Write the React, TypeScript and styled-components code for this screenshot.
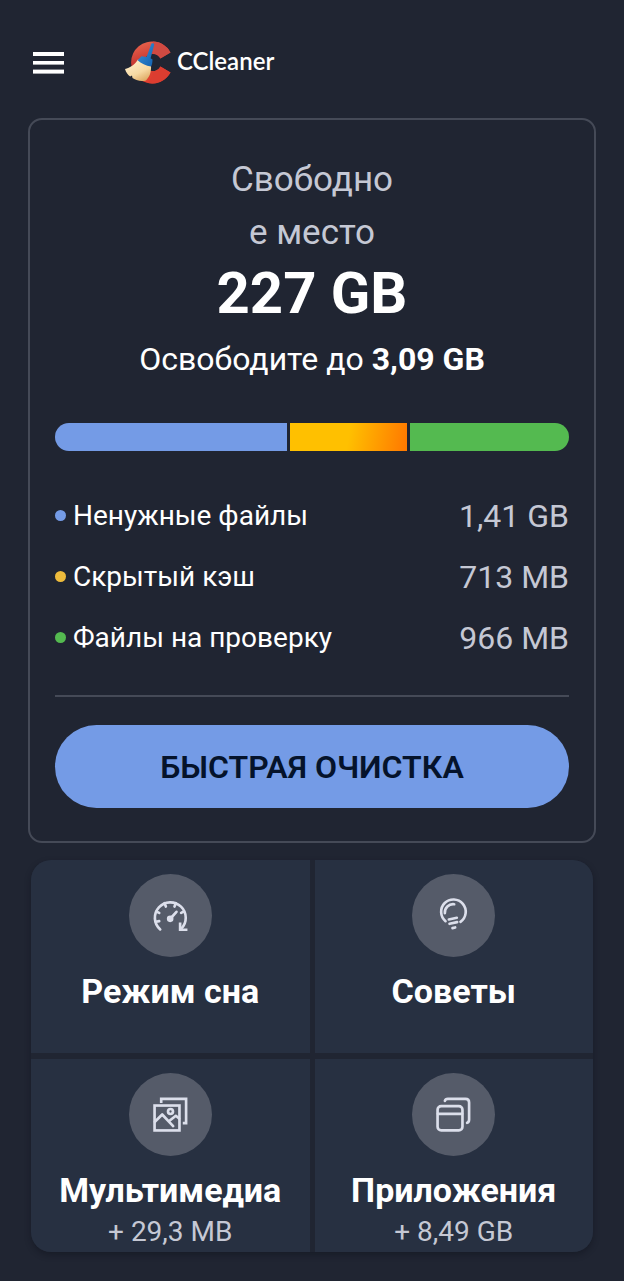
import React from "react";
import styled, { createGlobalStyle } from "styled-components";

const GlobalStyle = createGlobalStyle`
  * {
    box-sizing: border-box;
  }
  body {
    margin: 0;
    background: #202532;
    color: #ffffff;
    font-family: Roboto, "Noto Sans", sans-serif;
  }
`;

const Screen = styled.div`
  padding: 0 28px 28px;
`;

const Header = styled.header`
  display: flex;
  align-items: center;
  gap: 55px;
  height: 118px;
  padding-top: 7px;
`;

const MenuButton = styled.button`
  display: flex;
  padding: 4px;
  border: 0;
  background: none;
  color: #ffffff;
  cursor: pointer;
`;

const Brand = styled.a`
  display: flex;
  align-items: center;
  gap: 4px;
  color: #ffffff;
  text-decoration: none;
`;

const BrandName = styled.span`
  padding-bottom: 3px;
  font-family: Lato, sans-serif;
  font-size: 24px;
  font-weight: 600;
  line-height: 28px;
`;

const Card = styled.section`
  display: flex;
  flex-direction: column;
  padding: 33px 25px 33px;
  border: 2px solid #454a57;
  border-radius: 14px;
`;

const Summary = styled.div`
  display: flex;
  flex-direction: column;
  align-items: center;
  text-align: center;
`;

const Caption = styled.h1`
  width: 168px;
  margin: 0;
  color: #c5c8d4;
  font-size: 35px;
  font-weight: 400;
  line-height: 53px;
`;

const FreeSpace = styled.strong`
  font-size: 58px;
  font-weight: 700;
  line-height: 68px;
`;

const Hint = styled.p`
  margin: 12px 0 0;
  font-size: 32px;
  line-height: 40px;
`;

const UsageBar = styled.div`
  display: flex;
  gap: 3px;
  height: 28px;
  margin: 44px 0 34px;
  border-radius: 14px;
  overflow: hidden;
`;

const Segment = styled.div<{ $share: number; $fill: string }>`
  flex: ${(p) => p.$share} 1 0;
  background: ${(p) => p.$fill};
`;

const Legend = styled.ul`
  margin: 0;
  padding: 0;
  list-style: none;
`;

const LegendRow = styled.li`
  display: flex;
  align-items: center;
  height: 61px;
`;

const Dot = styled.span<{ $color: string }>`
  width: 11px;
  height: 11px;
  margin-right: 7px;
  border-radius: 50%;
  background: ${(p) => p.$color};
`;

const LegendLabel = styled.span`
  flex: 1;
  font-size: 28px;
`;

const LegendValue = styled.span`
  color: #c5c8d4;
  font-size: 32px;
`;

const Divider = styled.hr`
  width: 100%;
  height: 2px;
  margin: 27px 0 28px;
  border: 0;
  background: #454a57;
`;

const CleanButton = styled.button`
  height: 83px;
  border: 0;
  border-radius: 42px;
  background: #749be6;
  color: #05132b;
  font-family: inherit;
  font-size: 32px;
  font-weight: 600;
  cursor: pointer;
`;

const Tiles = styled.nav`
  display: grid;
  grid-template-columns: 1fr 1fr;
  gap: 6px 5px;
  margin: 17px 3px 0;
  border-radius: 20px;
  box-shadow: 0 3px 6px rgba(12, 16, 26, 0.4);
  background: #202532;
  overflow: hidden;
`;

const Tile = styled.a`
  display: flex;
  flex-direction: column;
  align-items: center;
  min-height: 193px;
  padding-top: 14px;
  background: #273041;
  color: #ffffff;
  text-decoration: none;
`;

const IconDisc = styled.span`
  display: flex;
  width: 83px;
  height: 83px;
  border-radius: 50%;
  background: #555b69;
  color: #dcdfeb;
`;

const TileTitle = styled.span`
  margin-top: 12px;
  font-size: 34px;
  font-weight: 700;
  line-height: 44px;
`;

const TileNote = styled.span`
  color: #c5c8d4;
  font-size: 28px;
  line-height: 40px;
`;

const MenuIcon = () => (
  <svg width="33" height="22" viewBox="0 0 33 22" fill="currentColor" aria-hidden="true">
    <rect x="1" y="0" width="31" height="4" />
    <rect x="1" y="9" width="31" height="3.6" />
    <rect x="1" y="17.6" width="31" height="4" />
  </svg>
);

const Logo = () => (
  <svg width="49" height="44" viewBox="0 0 49 44" aria-hidden="true">
    <defs>
      <linearGradient id="ring" x1="0" y1="0" x2="0.3" y2="1">
        <stop offset="0" stopColor="#ef6a50" />
        <stop offset="0.5" stopColor="#c93a34" />
        <stop offset="1" stopColor="#e5402f" />
      </linearGradient>
      <linearGradient id="bristle" x1="0.2" y1="0" x2="0.8" y2="1">
        <stop offset="0" stopColor="#fff0cf" />
        <stop offset="0.6" stopColor="#f7d9a2" />
        <stop offset="1" stopColor="#dca65f" />
      </linearGradient>
      <linearGradient id="handle" x1="0" y1="0" x2="1" y2="1">
        <stop offset="0" stopColor="#3d94dc" />
        <stop offset="1" stopColor="#1260ae" />
      </linearGradient>
    </defs>
    <path
      d="M46.5 11.4A21 21 0 1 0 46.5 31.6L36.400 25.400A8.6 8.6 0 1 1 36.400 17.600Z"
      fill="url(#ring)"
    />
    <path d="M29 0.600A21 21 0 0 1 46.5 11.4L36.400 17.600A8.6 8.6 0 0 0 29 13Z" fill="#d04a42" />
    <path d="M46.5 31.6A21 21 0 0 1 24 42L31 30A8.600 8.600 0 0 0 36.400 25.400Z" fill="#dc3d30" />
    <path
      d="M14 18.5C11 23.5 6 27 1 28C2 31.5 4 34 6.200 35.500L8 34.500L8.500 37C11 39 17 41 22 39.500C25.500 36 27.500 31 27 24.500Z"
      fill="url(#bristle)"
    />
    <path
      d="M27.400 2.800C28.300 1.800 30.300 2.400 30.200 3.800L26.600 17.200L28.500 18.500C28.500 21 28 24 27 25.500C22 24.800 17 22.500 13.600 19.200L17.500 15.300L22.600 16Z"
      fill="url(#handle)"
    />
  </svg>
);

const DiscIcon = ({ children }: { children: React.ReactNode }) => (
  <svg
    width="83"
    height="83"
    viewBox="0 0 250 250"
    fill="none"
    stroke="currentColor"
    strokeWidth="8"
    strokeLinecap="round"
    strokeLinejoin="round"
    aria-hidden="true"
  >
    {children}
  </svg>
);

const GaugeIcon = () => (
  <DiscIcon>
    <path d="M94 167A46.500 46.500 0 1 1 157 165" />
    <path d="M154 150V168H172" strokeLinecap="square" strokeLinejoin="miter" />
    <path d="M81 144L91 142M82 113L91 117M107 88L111 98M141 88L137 98M165 113L157 117" />
    <path d="M125 134L143 114" />
    <circle cx="124" cy="135" r="6" fill="currentColor" />
  </DiscIcon>
);

const BulbIcon = () => (
  <DiscIcon>
    <path d="M101 142A37 37 0 1 1 146 144" />
    <path d="M99 118A25 25 0 0 1 127 91" />
    <path d="M111 137L135 132M113 150L136 145M122 163L130 161" />
  </DiscIcon>
);

const PicturesIcon = () => (
  <DiscIcon>
    <g strokeLinecap="square" strokeLinejoin="miter">
      <rect x="77" y="98" width="75" height="75" />
      <path d="M97 86V78H172V151H166" />
    </g>
    <path d="M78 147L100 125L133 160M122 144L141 129L151 137" />
    <circle cx="125" cy="116" r="7.500" />
  </DiscIcon>
);

const WindowsIcon = () => (
  <DiscIcon>
    <rect x="77" y="100" width="75" height="73" rx="11" />
    <path d="M78 123H151" />
    <path d="M99 84C100 80 103 78 108 78H161Q172 78 172 89V140Q172 148 166 150" />
  </DiscIcon>
);

const categories = [
  { label: "Ненужные файлы", value: "1,41 GB", dot: "#749be6", fill: "#749be6", share: 231 },
  {
    label: "Скрытый кэш",
    value: "713 MB",
    dot: "#edbb3c",
    fill: "linear-gradient(100deg, #ffc000 50%, #ff7a00 98%)",
    share: 117,
  },
  { label: "Файлы на проверку", value: "966 MB", dot: "#54ba50", fill: "#54ba50", share: 158 },
];

const tiles = [
  { title: "Режим сна", Icon: GaugeIcon },
  { title: "Советы", Icon: BulbIcon },
  { title: "Мультимедиа", note: "+ 29,3 MB", Icon: PicturesIcon },
  { title: "Приложения", note: "+ 8,49 GB", Icon: WindowsIcon },
];

export default function App() {
  return (
    <Screen>
      <GlobalStyle />
      <Header>
        <MenuButton aria-label="Меню">
          <MenuIcon />
        </MenuButton>
        <Brand href="#">
          <Logo />
          <BrandName>CCleaner</BrandName>
        </Brand>
      </Header>
      <main>
        <Card>
          <Summary>
            <Caption>
              Свободно
              <br />е место
            </Caption>
            <FreeSpace>227 GB</FreeSpace>
            <Hint>
              Освободите до <b>3,09 GB</b>
            </Hint>
          </Summary>
          <UsageBar>
            {categories.map((c) => (
              <Segment key={c.label} $share={c.share} $fill={c.fill} />
            ))}
          </UsageBar>
          <Legend>
            {categories.map((c) => (
              <LegendRow key={c.label}>
                <Dot $color={c.dot} />
                <LegendLabel>{c.label}</LegendLabel>
                <LegendValue>{c.value}</LegendValue>
              </LegendRow>
            ))}
          </Legend>
          <Divider />
          <CleanButton>БЫСТРАЯ ОЧИСТКА</CleanButton>
        </Card>
        <Tiles>
          {tiles.map(({ title, note, Icon }) => (
            <Tile key={title} href="#">
              <IconDisc>
                <Icon />
              </IconDisc>
              <TileTitle>{title}</TileTitle>
              {note && <TileNote>{note}</TileNote>}
            </Tile>
          ))}
        </Tiles>
      </main>
    </Screen>
  );
}
